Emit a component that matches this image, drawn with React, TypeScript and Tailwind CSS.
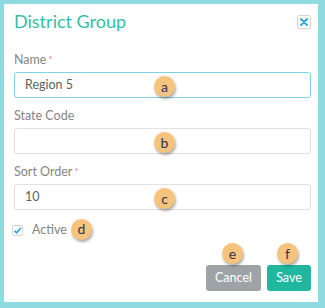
import React from 'react';

function Badge({ letter, className }: { letter: string; className: string }) {
  return (
    <span
      className={`absolute flex h-[21px] w-[21px] items-center justify-center rounded-full bg-[#f8c37c] text-[14px] leading-none text-[#2b3557] shadow-[1px_2px_3px_rgba(0,0,0,0.35)] ${className}`}
    >
      {letter}
    </span>
  );
}

function Field({
  label,
  required,
  value,
  focused,
  letter,
}: {
  label: string;
  required?: boolean;
  value: string;
  focused?: boolean;
  letter: string;
}) {
  return (
    <div className="flex flex-col">
      <div className="h-[18px] text-[12.5px] leading-[18px] text-[#858585]">
        {label}
        {required && <span className="ml-[2px] align-top text-[9px] text-[#e8737b]">*</span>}
      </div>
      <div
        className={`relative mt-[3px] flex h-[26px] w-[297px] items-center rounded-[3px] border px-[10px] text-[12.5px] text-[#616161] ${
          focused ? 'border-[#7fd3e8]' : 'border-[#e1e1e1]'
        }`}
      >
        {value}
        <Badge letter={letter} className="left-[139px] top-[3px]" />
      </div>
    </div>
  );
}

export default function App() {
  return (
    <div className="h-[308px] w-[325px] bg-[#8edce1] pl-[4px] pt-[4px] font-['Lato',sans-serif]">
      <div className="flex h-[298px] w-[314px] flex-col bg-white pb-[11px] pl-[10px] pt-[5px]">
        <div className="flex items-start justify-between pr-[7px]">
          <h2 className="text-[18px] leading-[24px] text-[#35bfa6]">District Group</h2>
          <button className="mt-[6px] flex h-[14px] w-[14px] items-center justify-center rounded-[2px] border border-[#d5d5d5] bg-white">
            <svg width="8" height="8" viewBox="0 0 8 8">
              <path d="M1 1L7 7M7 1L1 7" stroke="#2aa6df" strokeWidth="1.8" strokeLinecap="round" />
            </svg>
          </button>
        </div>

        <div className="mt-[18px] flex flex-col gap-[9px]">
          <Field label="Name" required value="Region 5" focused letter="a" />
          <Field label="State Code" value="" letter="b" />
          <Field label="Sort Order" required value="10" letter="c" />
        </div>

        <div className="mt-[11px] flex h-[18px] items-center">
          <span className="ml-[-2px] flex h-[11px] w-[11px] items-center justify-center rounded-[2px] border border-[#d5d5d5]">
            <svg width="9" height="9" viewBox="0 0 9 9">
              <path d="M1.5 4.8L3.6 6.8L7.8 2" stroke="#1ea8de" strokeWidth="1.6" fill="none" />
            </svg>
          </span>
          <span className="relative ml-[9px] text-[12.5px] text-[#858585]">
            Active
            <Badge letter="d" className="left-[39px] top-[-2px]" />
          </span>
        </div>

        <div className="mt-auto flex justify-end gap-[6px] pr-[7px]">
          <button className="relative h-[26px] w-[55px] rounded-[3px] bg-[#9da3a7] text-[12.5px] text-white">
            Cancel
            <Badge letter="e" className="left-[16px] top-[-22px]" />
          </button>
          <button className="relative h-[26px] w-[44px] rounded-[3px] bg-[#1fb89f] text-[12.5px] text-white">
            Save
            <Badge letter="f" className="left-[10px] top-[-22px]" />
          </button>
        </div>
      </div>
    </div>
  );
}
